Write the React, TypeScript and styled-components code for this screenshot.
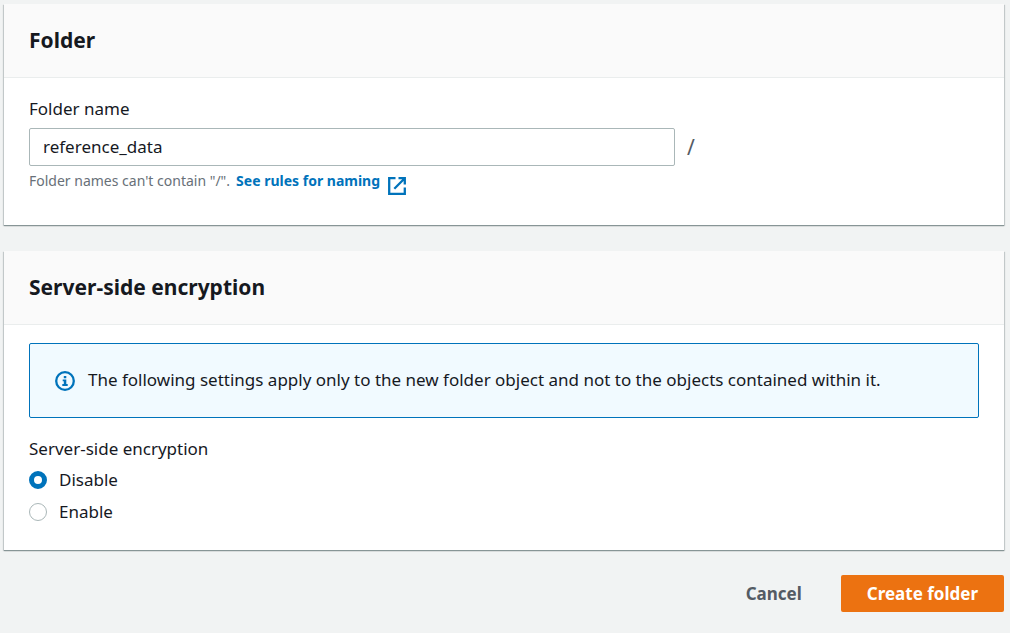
import React, { useState } from "react";
import styled, { createGlobalStyle } from "styled-components";

const GlobalStyle = createGlobalStyle`
  *, *::before, *::after { box-sizing: border-box; }
  body {
    margin: 0;
    background: #f1f3f3;
    color: #16191f;
    font-family: "Noto Sans", "Open Sans", sans-serif;
    font-size: 17px;
    line-height: 22px;
  }
`;

const Form = styled.form`
  display: flex;
  flex-direction: column;
  gap: 25px;
  padding: 4px 6px 20px 4px;
`;

const Cards = styled.div`
  display: flex;
  flex-direction: column;
  gap: 26px;
`;

const Card = styled.section`
  background: #ffffff;
  box-shadow: 0 1px 0 0 #879596, 0 1px 1px 0 rgba(0, 28, 36, 0.3),
    1px 1px 1px 0 rgba(0, 28, 36, 0.15), -1px 1px 1px 0 rgba(0, 28, 36, 0.15);
`;

const CardHeader = styled.header`
  padding: 22px 25px 23px;
  background: #fafafa;
  border-bottom: 1px solid #eaeded;
`;

const CardTitle = styled.h2`
  margin: 0;
  font-size: 21px;
  line-height: 28px;
  font-weight: 700;
`;

const CardBody = styled.div`
  padding: 20px 25px 33px;
`;

const EncryptionBody = styled.div`
  padding: 18px 25px 22px;
`;

const FieldLabel = styled.label`
  display: block;
  margin-bottom: 8px;
`;

const InputRow = styled.div`
  display: flex;
  align-items: center;
  gap: 12px;
`;

const TextInput = styled.input`
  flex: 0 0 68%;
  min-width: 0;
  height: 38px;
  padding: 0 13px 2px;
  border: 1px solid #aab7b8;
  border-radius: 2px;
  background: #ffffff;
  color: inherit;
  font: inherit;
  outline: none;
  &:focus { border-color: #0073bb; }
`;

const Suffix = styled.span`
  color: #545b64;
  font-size: 21px;
`;

const Hint = styled.p`
  display: flex;
  flex-wrap: wrap;
  gap: 6px;
  margin: 4px 0 0;
  font-size: 14px;
  color: #687078;
`;

const HintLink = styled.a`
  display: inline-flex;
  gap: 8px;
  color: #0073bb;
  font-weight: 700;
  text-decoration: none;
  svg { margin: 7px 0 -7px; }
`;

const Alert = styled.div`
  display: flex;
  align-items: flex-end;
  gap: 13px;
  margin-bottom: 20px;
  padding: 25px 25px 26px;
  border: 1px solid #0073bb;
  border-radius: 2px;
  background: #f1faff;
  svg { flex: none; }
`;

const RadioGroup = styled.fieldset`
  margin: 0;
  padding: 0;
  border: 0;
`;

const Legend = styled.legend`
  padding: 0 0 4px;
`;

const RadioOption = styled.label`
  display: flex;
  align-items: center;
  gap: 12px;
  width: fit-content;
  height: 32px;
`;

const Radio = styled.input`
  appearance: none;
  width: 18px;
  height: 18px;
  margin: 0;
  border: 1px solid #aab7b8;
  border-radius: 50%;
  background: #ffffff;
  &:checked { border: 5px solid #0073bb; }
`;

const Actions = styled.div`
  display: flex;
  justify-content: flex-end;
  gap: 13px;
`;

const Button = styled.button<{ $primary?: boolean }>`
  height: 37px;
  padding: 0 26px;
  border: 0;
  border-radius: 2px;
  background: ${(p) => (p.$primary ? "#ec7211" : "transparent")};
  color: ${(p) => (p.$primary ? "#ffffff" : "#545b64")};
  font: inherit;
  font-weight: 700;
  cursor: pointer;
`;

const ExternalIcon = () => (
  <svg width="18" height="18" viewBox="0 0 18 18" fill="none" stroke="currentColor" strokeWidth="2.3" aria-hidden="true">
    <path d="M7.5 1.2H1.2V16.8H16.8V10.5" />
    <path d="M10.5 1.2H16.8V7.5M16.5 1.5L6.3 11.7" />
  </svg>
);

const InfoIcon = () => (
  <svg width="20" height="20" viewBox="0 0 20 20" fill="none" aria-hidden="true">
    <circle cx="10" cy="10" r="8.8" stroke="#0073bb" strokeWidth="2.3" />
    <path d="M8.8 5H11.3V7.2H8.8ZM7.7 8.4H11.3V13H12.7V15H7.3V13H8.8V10.3H7.7Z" fill="#0073bb" />
  </svg>
);

const modes = ["Disable", "Enable"];

export default function App() {
  const [name, setName] = useState("reference_data");
  const [mode, setMode] = useState("Disable");

  return (
    <>
      <GlobalStyle />
      <Form onSubmit={(e) => e.preventDefault()}>
        <Cards>
          <Card>
            <CardHeader>
              <CardTitle>Folder</CardTitle>
            </CardHeader>
            <CardBody>
              <FieldLabel htmlFor="folder-name">Folder name</FieldLabel>
              <InputRow>
                <TextInput
                  id="folder-name"
                  type="text"
                  spellCheck={false}
                  aria-describedby="folder-hint"
                  value={name}
                  onChange={(e) => setName(e.target.value)}
                />
                <Suffix>/</Suffix>
              </InputRow>
              <Hint id="folder-hint">
                <span>Folder names can't contain "/".</span>
                <HintLink href="#naming">
                  See rules for naming
                  <ExternalIcon />
                </HintLink>
              </Hint>
            </CardBody>
          </Card>

          <Card>
            <CardHeader>
              <CardTitle>Server-side encryption</CardTitle>
            </CardHeader>
            <EncryptionBody>
              <Alert role="note">
                <InfoIcon />
                <span>The following settings apply only to the new folder object and not to the objects contained within it.</span>
              </Alert>
              <RadioGroup>
                <Legend>Server-side encryption</Legend>
                {modes.map((m) => (
                  <RadioOption key={m}>
                    <Radio type="radio" name="encryption" value={m} checked={mode === m} onChange={() => setMode(m)} />
                    {m}
                  </RadioOption>
                ))}
              </RadioGroup>
            </EncryptionBody>
          </Card>
        </Cards>

        <Actions>
          <Button type="button">Cancel</Button>
          <Button type="submit" $primary>Create folder</Button>
        </Actions>
      </Form>
    </>
  );
}
